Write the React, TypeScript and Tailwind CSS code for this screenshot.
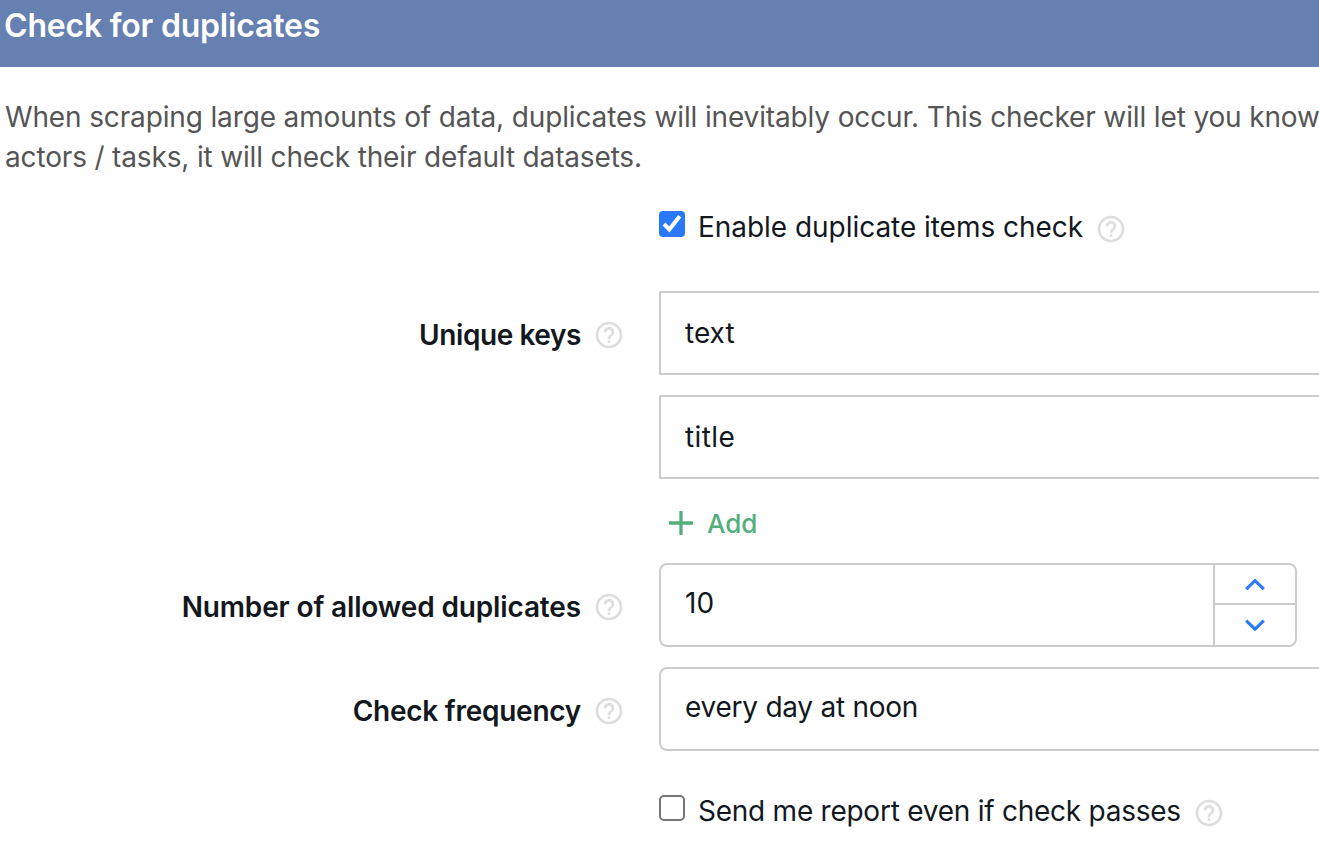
import type { ReactNode } from "react";
import { MdHelpOutline } from "react-icons/md";

function Help() {
  return <MdHelpOutline className="size-8 shrink-0 text-[#dddddd]" />;
}

function Label({ text, spacing }: { text: string; spacing: string }) {
  return (
    <div className="flex h-8 w-[625px] shrink-0 items-center justify-end gap-3">
      <span className={`font-semibold ${spacing}`}>{text}</span>
      <Help />
    </div>
  );
}

function Checkbox({ checked = false }: { checked?: boolean }) {
  return checked ? (
    <span className="flex size-[26px] shrink-0 rounded-[4px] bg-[#2a78fa]">
      <svg viewBox="0 0 26 26" className="size-[26px]" fill="none" stroke="white" strokeWidth="4">
        <path d="M5 13L10.3 18.4L20.7 5.3" />
      </svg>
    </span>
  ) : (
    <span className="size-[26px] shrink-0 rounded-[5px] border-2 border-[#767676]" />
  );
}

function CheckRow({ text, checked, spacing }: { text: string; checked?: boolean; spacing: string }) {
  return (
    <div className="flex h-[34px] items-start pl-[659px]">
      <Checkbox checked={checked} />
      <span className={`-mt-1 ml-[13px] leading-10 ${spacing}`}>{text}</span>
      <div className="mt-0.5 ml-3">
        <Help />
      </div>
    </div>
  );
}

function Field({ children, rounded }: { children: ReactNode; rounded?: boolean }) {
  return (
    <div
      className={`flex h-[84px] w-[720px] shrink-0 items-center border-2 border-[#cccccc] px-6 ${
        rounded ? "rounded-[8px] pb-1" : ""
      }`}
    >
      {children}
    </div>
  );
}

function Chevron({ down = false }: { down?: boolean }) {
  return (
    <svg viewBox="0 0 20 12" className="h-3 w-5" fill="none" stroke="#2b7cf9" strokeWidth="3.2">
      <path d={down ? "M1.2 1.7L10 10.2L18.8 1.7" : "M1.2 11.2L10 2.7L18.8 11.2"} />
    </svg>
  );
}

export default function App() {
  return (
    <div className="h-[862px] w-full overflow-hidden bg-white font-['Inter',sans-serif] text-[28px] leading-8 whitespace-nowrap text-[#12181d]">
      <header className="h-[67px] bg-[#6580b1] pt-1.5 pl-1">
        <h1 className="text-[32px] leading-10 font-semibold tracking-[-0.2px] text-white">Check for duplicates</h1>
      </header>

      <p className="mt-[30px] pl-[5px] leading-10 text-[#555555]">
        <span className="block tracking-[-0.14px]">
          When scraping large amounts of data, duplicates will inevitably occur. This checker will let you know
        </span>
        <span className="block tracking-[-0.16px]">actors / tasks, it will check their default datasets.</span>
      </p>

      <div className="mt-[34px]">
        <CheckRow text="Enable duplicate items check" checked spacing="tracking-[-0.04px]" />
      </div>

      <div className="mt-[46px] flex">
        <div className="mt-7">
          <Label text="Unique keys" spacing="tracking-[-0.42px]" />
        </div>
        <div className="ml-[34px] flex flex-col gap-5">
          <Field>text</Field>
          <Field>
            <span className="tracking-[0.4px]">title</span>
          </Field>
        </div>
      </div>

      <button className="mt-7 ml-[669px] flex h-8 items-center gap-3.5 text-[#53ae7d]">
        <svg viewBox="0 0 24 24" className="size-6" stroke="currentColor" strokeWidth="3.3">
          <path d="M0 12H24M12 0V24" />
        </svg>
        <span className="pt-0.5 text-[26px] font-medium">Add</span>
      </button>

      <div className="mt-6 flex">
        <div className="mt-7">
          <Label text="Number of allowed duplicates" spacing="tracking-[-0.14px]" />
        </div>
        <div className="ml-[34px] flex h-[84px] w-[638px] rounded-[8px] border-2 border-[#cccccc]">
          <div className="flex flex-1 items-center pb-1 pl-6">10</div>
          <div className="flex w-[82px] flex-col border-l-2 border-[#cccccc]">
            <button className="flex h-10 items-center justify-center border-b-2 border-[#cccccc]">
              <Chevron />
            </button>
            <button className="flex h-10 items-center justify-center">
              <Chevron down />
            </button>
          </div>
        </div>
      </div>

      <div className="mt-5 flex">
        <div className="mt-7">
          <Label text="Check frequency" spacing="tracking-[-0.26px]" />
        </div>
        <div className="ml-[34px]">
          <Field rounded>
            <span className="tracking-[-0.25px]">every day at noon</span>
          </Field>
        </div>
      </div>

      <div className="mt-11">
        <CheckRow text="Send me report even if check passes" spacing="tracking-[-0.25px]" />
      </div>
    </div>
  );
}
